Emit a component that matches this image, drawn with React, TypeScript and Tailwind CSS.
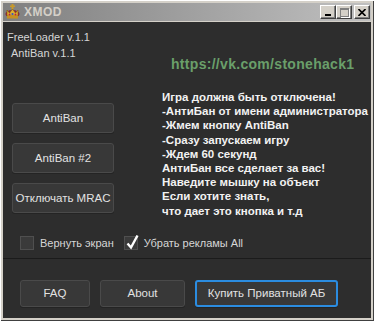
import { ReactNode } from "react";

const font = "font-['Liberation_Sans',Arial,sans-serif]";

const instructions = [
  "Игра должна быть отключена!",
  "-АнтиБан от имени администратора",
  "-Жмем кнопку AntiBan",
  "-Сразу запускаем игру",
  "-Ждем 60 секунд",
  "АнтиБан все сделает за вас!",
  "Наведите мышку на объект",
  "Если хотите знать,",
  "что дает это кнопка и т.д",
];

// кнопка в стиле тёмного скина
const SkinButton = ({ children, className = "", active = false }: { children: ReactNode; className?: string; active?: boolean }) => (
  <button
    className={
      "flex items-center justify-center whitespace-nowrap rounded-[3px] bg-[#383838] text-[11.5px] text-[#e2e2e2] shadow-[0_1px_0_#242424] " +
      (active ? "border-2 border-[#2b8ce0] " : "border border-[#4a4a4a] ") +
      className
    }
  >
    {children}
  </button>
);

const CheckBox = ({ checked, label }: { checked?: boolean; label: string }) => (
  <label className="flex items-center">
    <span className="relative h-[14px] w-[14px] border border-[#4f4f4f] bg-[#3a3a3a]">
      {checked && (
        <svg className="absolute -top-[3px] left-[1px]" width="13" height="16" viewBox="0 0 13 16">
          <path d="M1.5 9.5 L5 13.5 L11.5 1.5" fill="none" stroke="#ffffff" strokeWidth="2.4" />
        </svg>
      )}
    </span>
    <span className="ml-[6px] whitespace-nowrap text-[11px] text-[#d6d6d6]">{label}</span>
  </label>
);

const Crown = () => (
  <svg width="15" height="16" viewBox="0 0 15 16">
    <rect x="6.5" y="0" width="2" height="5" fill="#c89a2a" />
    <rect x="5" y="1.5" width="5" height="1.5" fill="#c89a2a" />
    <ellipse cx="7.5" cy="10" rx="7" ry="4" fill="#8c1c3c" />
    <path d="M2 12 L2 6 L4.5 9 L7.5 5 L10.5 9 L13 6 L13 12 Z" fill="#e0b030" stroke="#8a6010" strokeWidth="0.7" />
    <rect x="2" y="12" width="11" height="2.5" fill="#c89020" />
    <circle cx="4.5" cy="10.5" r="1" fill="#c02040" />
    <circle cx="10.5" cy="10.5" r="1" fill="#c02040" />
    <circle cx="7.5" cy="10" r="1.1" fill="#3050c0" />
  </svg>
);

const CaptionButton = ({ children, className = "" }: { children: ReactNode; className?: string }) => (
  <div
    className={
      "flex h-[14px] w-[16px] items-center justify-center border-t border-l border-t-white border-l-white border-r border-b border-r-[#404040] border-b-[#404040] bg-[#d4d0c8] shadow-[inset_-1px_-1px_#808080] " +
      className
    }
  >
    {children}
  </div>
);

export default function App() {
  return (
    <div className={"h-[321px] w-[374px] bg-[#d4d0c8] p-[3px] shadow-[inset_1px_1px_#ffffff,inset_-1px_-1px_#404040] " + font}>
      {/* заголовок окна */}
      <div className="flex h-[18px] items-center bg-gradient-to-r from-[#808080] to-[#c0c0c0] pl-[2px] pr-[1px]">
        <Crown />
        <span className="ml-[4px] text-[12px] font-bold tracking-[0.5px] text-[#d4d0c8]">XMOD</span>
        <div className="ml-auto flex">
          <CaptionButton>
            <span className="mt-[6px] h-[2px] w-[6px] bg-black" />
          </CaptionButton>
          <CaptionButton className="mr-[2px]">
            <span className="h-[9px] w-[9px] border border-t-2 border-[#808080] shadow-[1px_1px_#ffffff]" />
          </CaptionButton>
          <CaptionButton>
            <svg width="8" height="7" viewBox="0 0 8 7">
              <path d="M0.5 0 L7.5 7 M7.5 0 L0.5 7" stroke="#000" strokeWidth="1.6" />
            </svg>
          </CaptionButton>
        </div>
      </div>

      {/* клиентская часть */}
      <div className="mt-[1px] flex h-[296px] flex-col bg-[#2d2d2d]">
        <div className="flex h-[205px]">
          <div className="w-[120px] shrink-0 pl-[4px] pt-[7px] text-[11px] leading-[16px] text-[#d6d6d6]">
            <div>FreeLoader v.1.1</div>
            <div className="pl-[4px]">AntiBan v.1.1</div>
            <div className="mt-[42px] flex flex-col gap-[10px] pl-[5px]">
              <SkinButton className="h-[30px] w-[102px]">AntiBan</SkinButton>
              <SkinButton className="h-[30px] w-[102px]">AntiBan #2</SkinButton>
              <SkinButton className="h-[30px] w-[102px]">Отключать MRAC</SkinButton>
            </div>
          </div>
          <div className="flex-1 pl-[39px] pt-[34px]">
            <div className="whitespace-nowrap pl-[9px] text-[14px] font-bold leading-[16px] tracking-[0.3px] text-[#6a9f6a]">
              https://vk.com/stonehack1
            </div>
            <div className="mt-[18px] whitespace-nowrap text-[11.5px] font-bold leading-[14.2px] text-[#f2f2f2]">
              {instructions.map((line) => (
                <div key={line}>{line}</div>
              ))}
            </div>
          </div>
        </div>

        <div className="mt-[9px] flex h-[14px] items-center gap-[10px] pl-[17px]">
          <CheckBox label="Вернуть экран" />
          <CheckBox checked label="Убрать рекламы All" />
        </div>

        <div className="mt-[8px] flex flex-1 gap-[10px] border-t border-[#1b1b1b] pl-[17px] pt-[21px]">
          <SkinButton className="h-[27px] w-[70px]">FAQ</SkinButton>
          <SkinButton className="h-[27px] w-[85px]">About</SkinButton>
          <SkinButton active className="h-[27px] w-[143px]">Купить Приватный АБ</SkinButton>
        </div>
      </div>
    </div>
  );
}
